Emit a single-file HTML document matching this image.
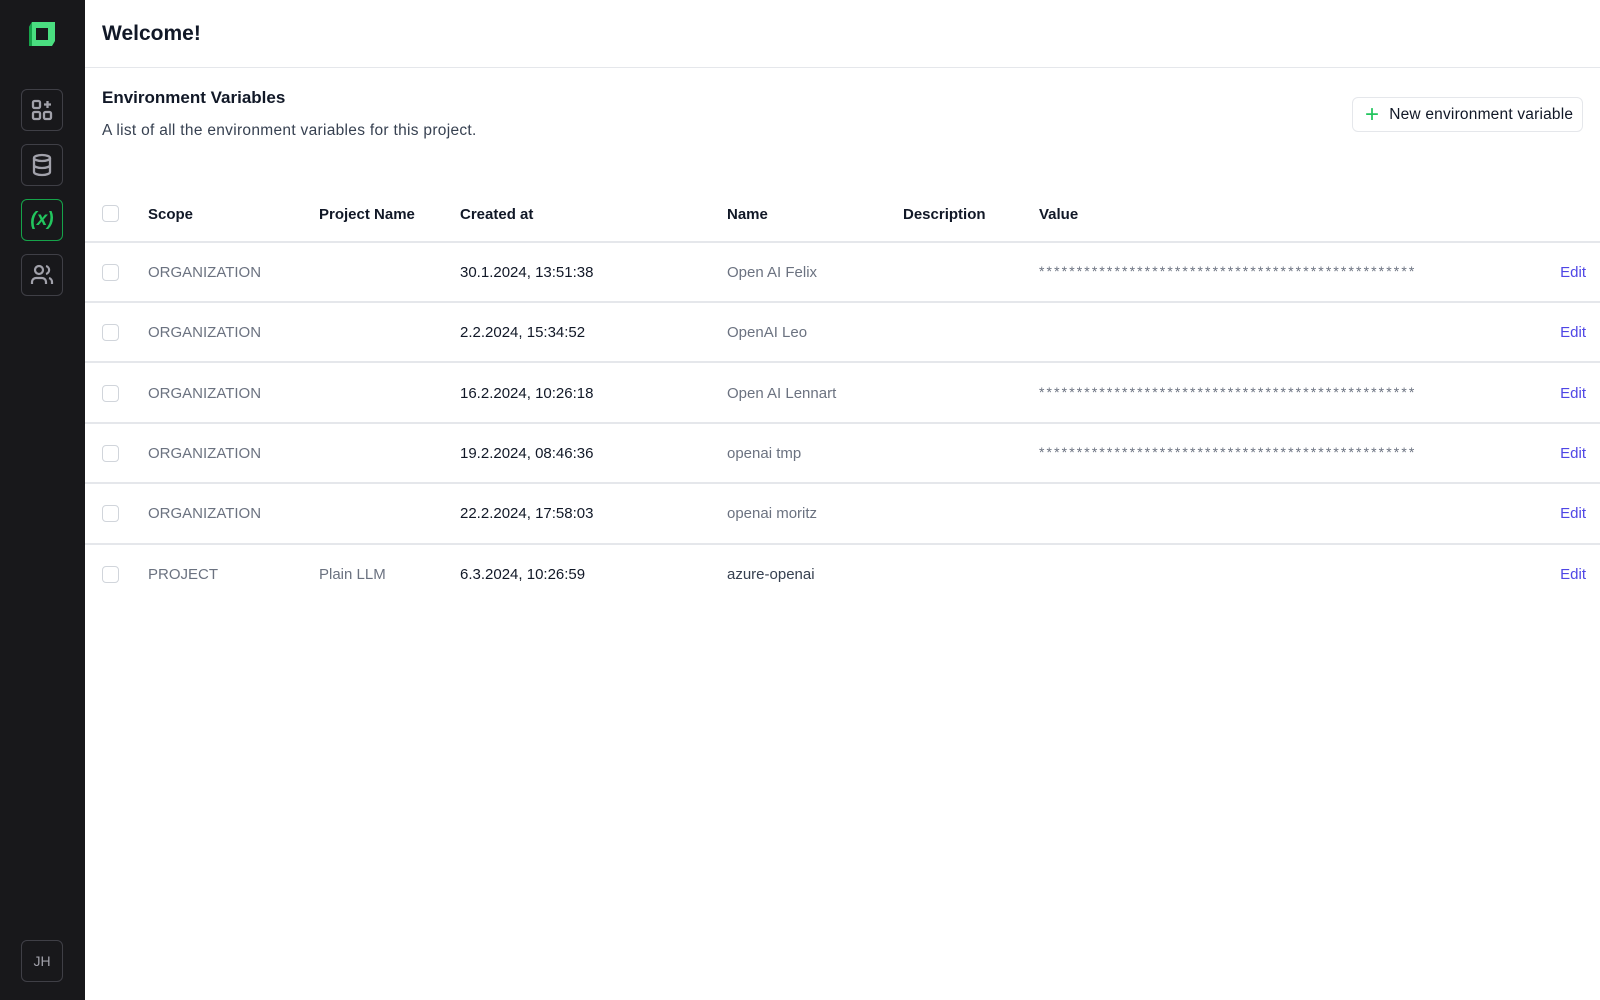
<!DOCTYPE html>
<html><head><meta charset="utf-8"><style>
*{box-sizing:border-box;margin:0;padding:0}
body{width:1600px;height:1000px;font-family:"Liberation Sans",sans-serif;background:#fff;position:relative;overflow:hidden;color:#111827}
.side{position:absolute;left:0;top:0;width:85px;height:1000px;background:#18181b}
.ib{position:absolute;left:21px;width:42px;height:42px;border:1.5px solid #3f3f46;border-radius:6px;display:flex;align-items:center;justify-content:center;color:#a1a1aa}
.hdr{position:absolute;left:85px;top:0;right:0;height:68px;border-bottom:1.5px solid #e5e7eb}
.abs{position:absolute;white-space:nowrap}
.cb{position:absolute;left:102px;width:17px;height:17px;border:1.5px solid #d1d5db;border-radius:4px}
.line{position:absolute;left:85px;right:0;height:1.5px;background:#e5e7eb}
.th{font-size:15px;font-weight:bold;color:#111827}
.g{font-size:15px;color:#6b7280}
.d{font-size:15px;color:#111827}
.e{font-size:15px;color:#4f46e5}
.st{font-size:14px;color:#6b7280;letter-spacing:2.1px}
.r{margin-top:1px}
</style></head><body>
<div class="side">
<svg class="abs" style="left:27px;top:20px" width="30" height="28" viewBox="0 0 30 28"><path d="M5 2 H28 V21 L25 26 H2 V7 Z M9 8 V20 H21 V8 Z" fill="#4ade80" fill-rule="evenodd"/><path d="M2 7 L5 2 V26 H2Z" fill="#16a34a"/></svg>
<div class="ib" style="top:89px"><svg width="24" height="24" viewBox="0 0 24 24" fill="none" stroke="#a1a1aa" stroke-width="2.3"><rect x="3" y="3" width="7" height="7" rx="1.5"/><rect x="3" y="14" width="7" height="7" rx="1.5"/><rect x="14" y="14" width="7" height="7" rx="1.5"/><path d="M17.5 3v7M14 6.5h7"/></svg></div>
<div class="ib" style="top:144px"><svg width="24" height="24" viewBox="0 0 24 24" fill="none" stroke="#a1a1aa" stroke-width="2.3"><ellipse cx="12" cy="5" rx="8" ry="3"/><path d="M4 5v14c0 1.7 3.6 3 8 3s8-1.3 8-3V5M4 12c0 1.7 3.6 3 8 3s8-1.3 8-3"/></svg></div>
<div class="ib" style="top:199px;border-color:#16a34a;color:#22c55e;font-size:19px;font-weight:bold;font-style:italic">(x)</div>
<div class="ib" style="top:254px"><svg width="24" height="24" viewBox="0 0 24 24" fill="none" stroke="#a1a1aa" stroke-width="2.2"><circle cx="9" cy="7" r="4"/><path d="M2 21v-2a4 4 0 0 1 4-4h6a4 4 0 0 1 4 4v2M16 3.1a4 4 0 0 1 0 7.8M22 21v-2a4 4 0 0 0-3-3.9"/></svg></div>
<div class="ib" style="top:940px;font-size:14px;color:#a1a1aa">JH</div>
</div>
<div class="hdr"></div>
<div class="abs" style="left:102px;top:22px;font-size:21px;font-weight:bold">Welcome!</div>
<div class="abs" style="left:102px;top:88px;font-size:17px;font-weight:bold">Environment Variables</div>
<div class="abs" style="left:102px;top:122px;font-size:15.5px;color:#374151;letter-spacing:0.3px">A list of all the environment variables for this project.</div>
<div class="abs" style="left:1352px;top:97px;width:231px;height:35px;border:1.5px solid #e5e7eb;border-radius:6px;font-size:15.5px;display:flex;align-items:center;padding-left:12px;letter-spacing:0.2px"><span style="color:#22c55e;font-size:24px;margin-right:10px;line-height:1;font-weight:300">+</span>New environment variable</div>
<div class="cb" style="top:205px"></div>
<div class="abs th" style="left:148px;top:206px">Scope</div>
<div class="abs th" style="left:319px;top:206px">Project Name</div>
<div class="abs th" style="left:460px;top:206px">Created at</div>
<div class="abs th" style="left:727px;top:206px">Name</div>
<div class="abs th" style="left:903px;top:206px">Description</div>
<div class="abs th" style="left:1039px;top:206px">Value</div>
<div class="line" style="top:241px"></div>

<div class="cb" style="top:264px"></div><div class="abs g" style="left:148px;top:264px">ORGANIZATION</div><div class="abs d" style="left:460px;top:264px">30.1.2024, 13:51:38</div><div class="abs g" style="left:727px;top:264px">Open AI Felix</div><div class="abs st" style="left:1039px;top:263px">**************************************************</div><div class="abs e" style="right:14px;top:264px">Edit</div>
<div class="line" style="top:301px"></div>
<div class="cb" style="top:324px"></div><div class="abs g" style="left:148px;top:324px">ORGANIZATION</div><div class="abs d" style="left:460px;top:324px">2.2.2024, 15:34:52</div><div class="abs g" style="left:727px;top:324px">OpenAI Leo</div><div class="abs e" style="right:14px;top:324px">Edit</div>
<div class="line" style="top:361px"></div>
<div class="cb" style="top:385px"></div><div class="abs g" style="left:148px;top:385px">ORGANIZATION</div><div class="abs d" style="left:460px;top:385px">16.2.2024, 10:26:18</div><div class="abs g" style="left:727px;top:385px">Open AI Lennart</div><div class="abs st" style="left:1039px;top:384px">**************************************************</div><div class="abs e" style="right:14px;top:385px">Edit</div>
<div class="line" style="top:422px"></div>
<div class="cb" style="top:445px"></div><div class="abs g" style="left:148px;top:445px">ORGANIZATION</div><div class="abs d" style="left:460px;top:445px">19.2.2024, 08:46:36</div><div class="abs g" style="left:727px;top:445px">openai tmp</div><div class="abs st" style="left:1039px;top:444px">**************************************************</div><div class="abs e" style="right:14px;top:445px">Edit</div>
<div class="line" style="top:482px"></div>
<div class="cb" style="top:505px"></div><div class="abs g" style="left:148px;top:505px">ORGANIZATION</div><div class="abs d" style="left:460px;top:505px">22.2.2024, 17:58:03</div><div class="abs g" style="left:727px;top:505px">openai moritz</div><div class="abs e" style="right:14px;top:505px">Edit</div>
<div class="line" style="top:543px"></div>
<div class="cb" style="top:566px"></div><div class="abs g" style="left:148px;top:566px">PROJECT</div><div class="abs g" style="left:319px;top:566px">Plain LLM</div><div class="abs d" style="left:460px;top:566px">6.3.2024, 10:26:59</div><div class="abs g" style="left:727px;top:566px;color:#374151">azure-openai</div><div class="abs e" style="right:14px;top:566px">Edit</div>
</body></html>
